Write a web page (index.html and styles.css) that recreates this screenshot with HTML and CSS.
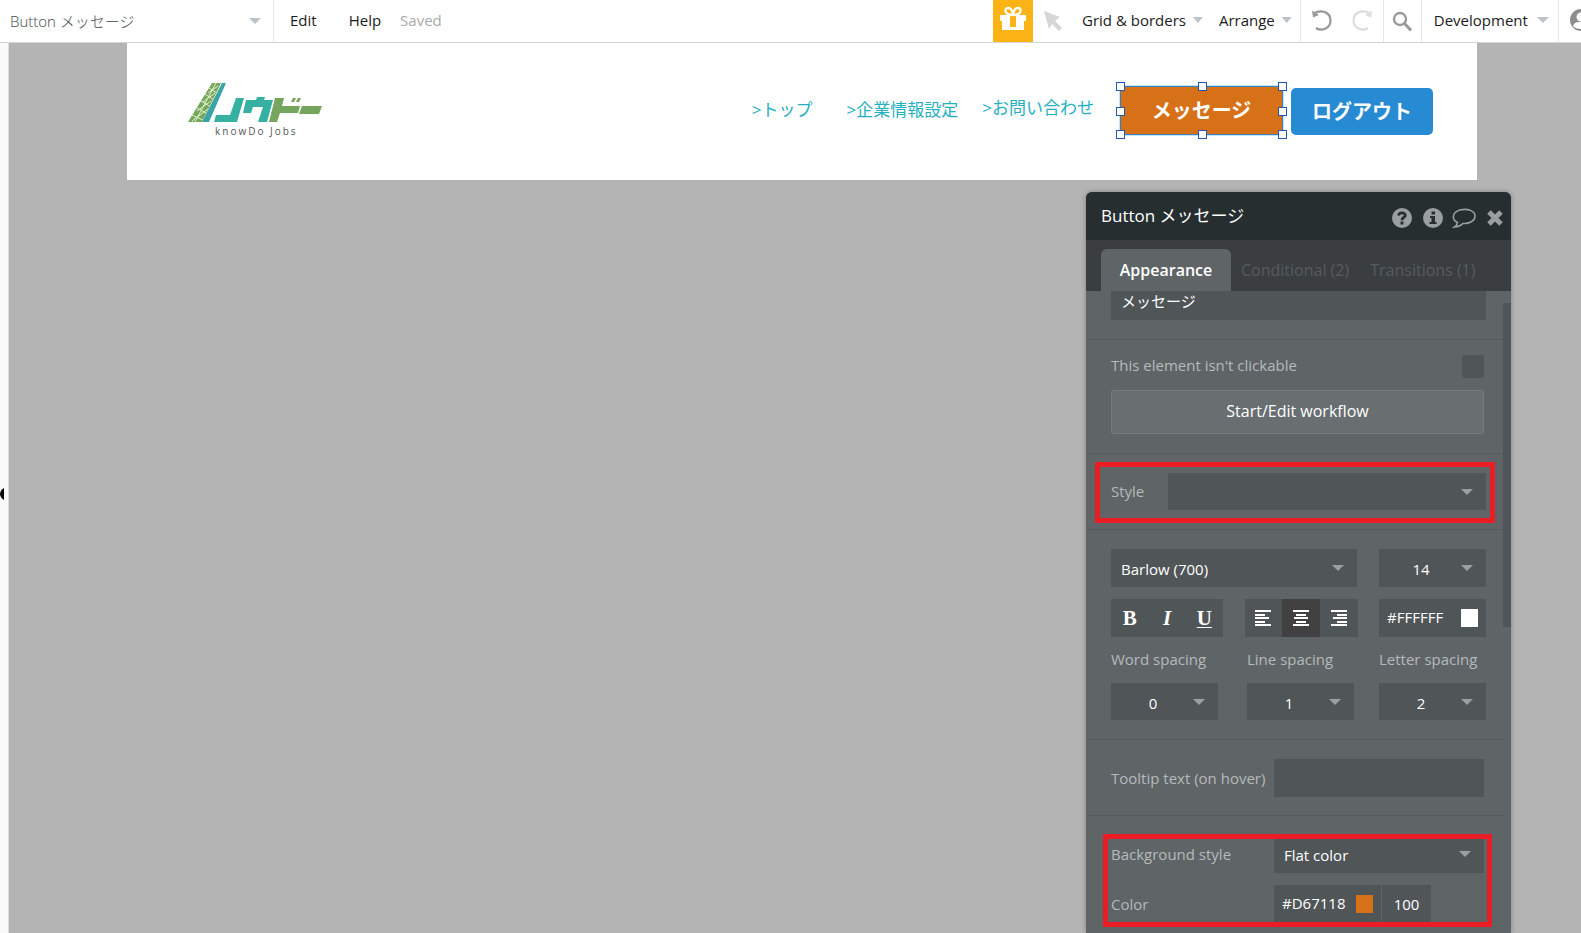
FILE: index.html
```html
<!DOCTYPE html>
<html lang="ja">
<head>
<meta charset="utf-8">
<title>Button メッセージ</title>
<link rel="stylesheet" href="styles.css">
</head>
<body>
<header class="topbar">
  <button class="element-picker"><span>Button メッセージ</span><i class="caret caret-wide"></i></button>
  <nav class="menu">
    <button class="menu-item">Edit</button>
    <button class="menu-item">Help</button>
    <span class="saved">Saved</span>
  </nav>
  <div class="tools">
    <button class="gift" aria-label="Gift">
      <svg width="28" height="26" viewBox="0 0 28 26"><path fill="#fff" d="M1 10h26v6h-2v9H3v-9H1z"/><path fill="#fbb315" d="M11 11h6v11h-6z"/><path fill="none" stroke="#fff" stroke-width="2.400" d="M14 10C11 10 6.500 9 6.500 5.500S12 1 14 9C16 1 21.500 2 21.500 5.500S17 10 14 10z"/></svg>
    </button>
    <button class="cursor-tool" aria-label="Select">
      <svg width="20" height="22" viewBox="0 0 20 22"><path fill="#d6d6d6" d="M1 1l16 6-5 4 7 7-3 3-7-7-3 5z"/></svg>
    </button>
    <button class="menu-item drop">Grid &amp; borders<i class="caret"></i></button>
    <button class="menu-item drop arrange">Arrange<i class="caret"></i></button>
    <div class="history">
      <button aria-label="Undo"><svg width="22" height="24" viewBox="0 0 22 24"><path fill="none" stroke="#999" stroke-width="2.200" d="M3 5.500C10 1 19.500 4 19.500 12.500S10 23.500 5 20"/><path fill="#999" d="M1 2.500l1 7 6-2.500z"/></svg></button>
      <button aria-label="Redo"><svg width="22" height="24" viewBox="0 0 22 24"><path fill="none" stroke="#ddd" stroke-width="2.200" d="M19 5.500C12 1 2.500 4 2.500 12.500S12 23.500 17 20"/><path fill="#ddd" d="M21 2.500l-1 7-6-2.500z"/></svg></button>
    </div>
    <button class="search" aria-label="Search"><svg width="20" height="22" viewBox="0 0 20 22"><circle cx="8" cy="9" r="6" fill="none" stroke="#999" stroke-width="2.400"/><path stroke="#999" stroke-width="3" d="M12.500 13.500l6.500 7"/></svg></button>
    <button class="menu-item version">Development<i class="caret caret-wide"></i></button>
    <button class="account" aria-label="Account"><svg width="24" height="24" viewBox="0 0 24 24"><circle cx="12" cy="12" r="11" fill="#8d8d8d"/><circle cx="12" cy="9" r="4.500" fill="#fff"/><path fill="#fff" d="M4 18c1-4 5-4 8-4s7 0 8 4c-3 4-13 4-16 0z"/></svg></button>
  </div>
</header>

<main class="workspace">
  <aside class="rail"><svg class="rail-handle" width="4" height="12" viewBox="0 0 4 12"><path d="M4 0v12C1.500 10.500 0 8 0 6s1.500-4.500 4-6z"/></svg></aside>
  <div class="canvas">
    <div class="site-header">
      <svg class="logo" width="134" height="56" viewBox="0 0 134 56" role="img" aria-label="knowDo Jobs">
        <path fill="#77a75b" d="M0 40L24 1h9L14 40z"/>
        <path fill="none" stroke="#e3f0cf" stroke-width="1" d="M7 40L28 1M4 33l13 6M9 26l11 6M13 19l10 6M17 12l9 6M21 6l8 5M4 39l16-12M9 29l14-10M15 20l12-9M20 11l10-7"/>
        <path fill="#3aa3a5" d="M34 1h4L21 40h-7z"/>
        <path fill="#35b0a3" d="M48 16h8l-7 24H26l2-7h14zM58 18h10l1-3h8l-1 3h9l-6 22h-9l5-15H65l-2 6h-8z"/>
        <path fill="#76a65e" d="M87 16h9l-2 8h18l-2 7H92l-3 9h-8zM105 16h3l-2 4h-3zM110 16h3l-2 4h-3zM114 24h20l-3 8h-20z"/>
        <text class="logo-text" x="27" y="53">knowDo Jobs</text>
      </svg>
      <nav class="site-nav">
        <a href="#top">&gt;トップ</a>
        <a href="#company">&gt;企業情報設定</a>
        <a href="#contact" class="contact">&gt;お問い合わせ</a>
      </nav>
      <div class="selected">
        <button class="site-button message">メッセージ</button>
        <i class="handle n w"></i><i class="handle n c"></i><i class="handle n e"></i>
        <i class="handle m w"></i><i class="handle m e"></i>
        <i class="handle s w"></i><i class="handle s c"></i><i class="handle s e"></i>
      </div>
      <button class="site-button logout">ログアウト</button>
    </div>
  </div>

  <section class="panel">
    <header class="panel-head">
      <h1>Button メッセージ</h1>
      <button aria-label="Help"><svg width="20" height="20" viewBox="0 0 20 20"><circle cx="10" cy="10" r="10" fill="#9aa0a2"/><path fill="none" stroke="#272e30" stroke-width="2.800" d="M6.500 7.500C7 4 13.500 4 13.300 7.500 13 9.500 10 9.500 10 12.200"/><path fill="#272e30" d="M8.500 13.500h3v3h-3z"/></svg></button>
      <button aria-label="Info"><svg width="20" height="20" viewBox="0 0 20 20"><circle cx="10" cy="10" r="10" fill="#9aa0a2"/><path fill="#272e30" d="M8.500 3.500h3.500v3H8.500zM7 8h5v6h1.500v2h-7v-2H8.500v-4H7z"/></svg></button>
      <button class="comment" aria-label="Comment"><svg width="24" height="20" viewBox="0 0 24 20"><path fill="none" stroke="#9aa0a2" stroke-width="1.600" d="M5.500 14.500C-1 11 .5 4 8 2c8-2 15 1 15 6 0 5-6 8-12 7.500-2 2-4.500 3.300-8.500 3.500 1.500-1 2.800-2.500 3-4.500z"/></svg></button>
      <button aria-label="Close"><svg width="16" height="16" viewBox="0 0 16 16"><path stroke="#9aa0a2" stroke-width="5" d="M2 2l12 12M14 2L2 14"/></svg></button>
    </header>
    <div class="tabs" role="tablist">
      <button class="tab active" role="tab" aria-selected="true">Appearance</button>
      <button class="tab" role="tab">Conditional (2)</button>
      <button class="tab" role="tab">Transitions (1)</button>
    </div>
    <div class="panel-body">
      <form class="fields">
        <div class="group first"><input class="field text" type="text" aria-label="Text" value="メッセージ"></div>
        <div class="group click">
          <div class="row check-row"><label for="noclick">This element isn't clickable</label><input id="noclick" class="check" type="checkbox"></div>
          <button type="button" class="workflow">Start/Edit workflow</button>
        </div>
        <div class="group">
          <div class="row style-row">
            <label for="style">Style</label>
            <div class="drop-field"><select id="style" class="field"><option></option></select><i class="caret caret-wide"></i></div>
            <div class="mark mark-style"></div>
          </div>
        </div>
        <div class="group type">
          <div class="row font-row">
            <div class="drop-field"><select class="field" aria-label="Font"><option>Barlow (700)</option></select><i class="caret caret-wide"></i></div>
            <div class="drop-field num"><select class="field" aria-label="Size"><option>14</option></select><i class="caret caret-wide"></i></div>
          </div>
          <div class="row format-row">
            <div class="segment letters"><button type="button"><b>B</b></button><button type="button"><em>I</em></button><button type="button"><u>U</u></button></div>
            <div class="segment">
              <button type="button" aria-label="Left"><svg width="16" height="16" viewBox="0 0 16 16"><path stroke="#fff" stroke-width="2" d="M0 1h16M0 5h10M0 8h14M0 12h10M0 15h16"/></svg></button>
              <button type="button" class="on" aria-label="Center"><svg width="16" height="16" viewBox="0 0 16 16"><path stroke="#fff" stroke-width="2" d="M0 1h16M3 5h10M1 8h14M3 12h10M0 15h16"/></svg></button>
              <button type="button" aria-label="Right"><svg width="16" height="16" viewBox="0 0 16 16"><path stroke="#fff" stroke-width="2" d="M0 1h16M6 5h10M2 8h14M6 12h10M0 15h16"/></svg></button>
            </div>
            <div class="color-field"><input class="field" type="text" aria-label="Font color" value="#FFFFFF"><i class="swatch white"></i></div>
          </div>
          <div class="spacing">
            <label for="ws">Word spacing</label><label for="ls">Line spacing</label><label for="lt">Letter spacing</label>
            <div class="drop-field num"><select id="ws" class="field"><option>0</option></select><i class="caret caret-wide"></i></div>
            <div class="drop-field num"><select id="ls" class="field"><option>1</option></select><i class="caret caret-wide"></i></div>
            <div class="drop-field num"><select id="lt" class="field"><option>2</option></select><i class="caret caret-wide"></i></div>
          </div>
        </div>
        <div class="group narrow">
          <div class="row pair"><label for="tip">Tooltip text (on hover)</label><input id="tip" class="field" type="text"></div>
        </div>
        <div class="group narrow last">
          <div class="row pair"><label for="bg">Background style</label><div class="drop-field"><select id="bg" class="field"><option>Flat color</option></select><i class="caret caret-wide"></i></div></div>
          <div class="row pair"><label for="col">Color</label>
            <div class="color-group"><div class="color-field"><input id="col" class="field" type="text" value="#D67118"><i class="swatch orange"></i></div><input class="field alpha" type="text" aria-label="Opacity" value="100"></div>
          </div>
          <div class="mark mark-color"></div>
        </div>
      </form>
      <div class="scrollbar"></div>
    </div>
  </section>
</main>
</body>
</html>
```
FILE: styles.css
```css
* { box-sizing: border-box; }

body {
  margin: 0;
  height: 100vh;
  display: flex;
  flex-direction: column;
  overflow: hidden;
  font: 15px/20px "Open Sans", "Noto Sans CJK JP", sans-serif;
  color: #1b1b1b;
  background: #b4b4b4;
}

button, input, select { font: inherit; color: inherit; border: 0; padding: 0; margin: 0; background: none; border-radius: 0; }
button { display: flex; align-items: center; justify-content: center; }
svg { display: block; flex: none; }

.caret { flex: none; width: 10px; height: 6px; background: #bcc4c9; clip-path: polygon(0 0, 100% 0, 50% 100%); }
.caret-wide { width: 12px; }

/* Top bar */
.topbar { display: flex; flex: none; height: 43px; background: #fff; border-bottom: 1px solid #d4d4d4; overflow: hidden; }
.element-picker { width: 274px; flex: none; justify-content: space-between; padding: 0 12px 0 10px; border-right: 1px solid #e6e9ea; color: #44494d; font-weight: 300; }
.menu { display: flex; align-items: center; padding: 0 0 2px 16px; }
.menu .menu-item { margin-right: 32px; }
.menu .menu-item + .menu-item { margin-right: 19px; }
.saved { color: #aaa; }
.tools { display: flex; flex: none; margin-left: auto; width: 588px; }
.tools > * { flex: none; }
.tools .menu-item { padding-bottom: 2px; }
.gift { width: 40px; padding-bottom: 6px; background: #fbb315; }
.cursor-tool { width: 41px; padding-right: 1px; }
.drop { gap: 7px; margin-left: 8px; }
.arrange { margin-left: 16px; padding-right: 8px; border-right: 1px solid #e8e8e8; }
.history { display: flex; gap: 18px; padding: 0 10px 2px; border-right: 1px solid #e8e8e8; }
.search { width: 38px; border-right: 1px solid #e8e8e8; }
.version { gap: 9px; padding: 0 9px 0 12px; border-right: 1px solid #e8e8e8; }
.account { padding-left: 10px; padding-bottom: 2px; }

/* Canvas */
.workspace { position: relative; display: flex; flex: 1; min-height: 0; }
.rail { display: flex; align-items: center; width: 9px; flex: none; background: #f9f9f9; border-right: 1px solid #ddd; }
.rail-handle { margin-top: 12px; }
.canvas { flex: 1; padding: 0 104px 0 118px; }
.site-header { display: flex; align-items: center; height: 137px; padding: 0 44px 0 61px; background: #fff; }
.logo { margin-bottom: 3px; }
.logo-text { font: 10px "Open Sans", sans-serif; letter-spacing: 2px; fill: #555; }
.site-nav { display: flex; align-items: center; gap: 34px; margin-left: auto; margin-bottom: 4px; font-size: 17px; }
.site-nav a { color: #25b0c2; text-decoration: none; white-space: nowrap; }
.site-nav .contact { margin-left: -10px; padding-bottom: 4px; }
.site-button { height: 48px; color: #fff; font-size: 20px; font-weight: 700; border-radius: 5px; }
.selected { position: relative; margin-left: 26px; margin-right: 8px; margin-bottom: 2px; border: 1px solid #3a7fc0; box-shadow: 0 0 0 1px #bfe6f5; }
.message { width: 161px; height: 47px; background: #d67118; }
.logout { width: 142px; height: 47px; background: #268bd2; }
.handle { position: absolute; width: 9px; height: 9px; background: #fff; border: 1px solid #2456b8; }
.handle.n { top: -5px; }
.handle.m { top: calc(50% - 4px); }
.handle.s { bottom: -5px; }
.handle.w { left: -5px; }
.handle.c { left: calc(50% - 4px); }
.handle.e { right: -5px; }

/* Property editor */
.panel { position: absolute; top: 149px; right: 70px; bottom: 0; width: 425px; display: flex; flex-direction: column; overflow: hidden; border-radius: 6px 6px 0 0; background: #5f6467; box-shadow: 0 0 5px rgba(0, 0, 0, .3); color: #fff; }
.panel-head { display: flex; flex: none; align-items: center; gap: 11px; height: 48px; padding: 0 8px 0 15px; background: #272e30; }
.panel-head h1 { flex: 1; margin: 0; font-size: 17px; font-weight: 400; }
.panel-head button { padding-top: 4px; }
.panel-head .comment { margin-left: -2px; }
.tabs { display: flex; flex: none; height: 51px; padding: 9px 15px 0; background: #3a3e40; }
.tab { padding: 0 11px 0 10px; font-size: 16px; color: #565b5e; white-space: nowrap; }
.tab.active { width: 130px; flex: none; padding: 0; font-weight: 600; color: #fff; background: #5f6467; border-radius: 6px 6px 0 0; }
.panel-body { display: flex; flex: 1; min-height: 0; overflow: hidden; }
.fields { flex: 1; margin-top: -9px; color: #b5babc; }
.group { position: relative; padding: 19px 17px 19px 25px; border-bottom: 1px solid #565b5e; }
.group.first { padding-top: 0; }
.group.click { padding-top: 15px; padding-right: 19px; }
.group.narrow { padding-right: 19px; padding-bottom: 18px; }
.group.last { border: 0; }
.row { display: flex; align-items: center; }
.field { display: block; width: 100%; height: 38px; padding: 0 10px; appearance: none; background: #505558; color: #fff; outline: 0; }
.field.text { padding-bottom: 2px; }
.check-row { justify-content: space-between; margin-bottom: 12px; }
.check-row label { padding-bottom: 3px; }
.check { appearance: none; width: 22px; height: 23px; background: #505558; border-radius: 2px; }
.workflow { width: 100%; height: 44px; padding-bottom: 2px; font-size: 16px; color: #fff; background: #696e71; border: 1px solid #757a7d; border-radius: 2px; }
.drop-field { position: relative; flex: 1; }
.drop-field .caret { position: absolute; right: 13px; top: 16px; background: #9a9fa2; pointer-events: none; }
.drop-field .field { padding-top: 2px; }
.style-row label { width: 57px; padding-bottom: 2px; }
.num .field { padding: 2px 23px 0 0; text-align: center; text-align-last: center; }
.font-row { gap: 22px; margin-bottom: 12px; }
.font-row .num { flex: 0 0 107px; }
.format-row { justify-content: space-between; }
.segment { display: flex; width: 113px; height: 38px; background: #505558; }
.segment button { flex: 1; color: #fff; }
.segment .on { background: #414141; }
.segment.letters { width: 112px; font: bold 21px "Liberation Serif", serif; }
.letters u { text-decoration-thickness: 1px; text-underline-offset: 2px; }
.color-field { position: relative; width: 107px; }
.color-field .field { padding: 0 8px 2px; }
.swatch { position: absolute; right: 8px; top: 10px; width: 17px; height: 18px; }
.white { background: #fff; }
.orange { background: #d67118; }
.spacing { display: grid; grid-template-columns: 136px 1fr 107px; }
.spacing .num { max-width: 107px; }
.spacing label { height: 46px; line-height: 44px; white-space: nowrap; }
.spacing .field, .style-row .field { height: 37px; }
.pair label { width: 163px; flex: none; }
.pair + .pair { margin-top: 12px; }
.color-group { display: flex; gap: 1px; }
.alpha { width: 49px; text-align: center; }
.mark { position: absolute; border: 5px solid #ea1c24; pointer-events: none; }
.mark-style { top: 8px; right: 8px; bottom: 6px; left: 9px; }
.mark-color { top: 18px; right: 11px; left: 17px; height: 93px; }
.scrollbar { flex: none; width: 8px; height: 324px; margin-top: 12px; background: #505558; }

/* Narrow windows */
@media (max-width: 1100px) {
  .canvas { padding: 0 16px; }
  .panel { right: 16px; }
}
```
